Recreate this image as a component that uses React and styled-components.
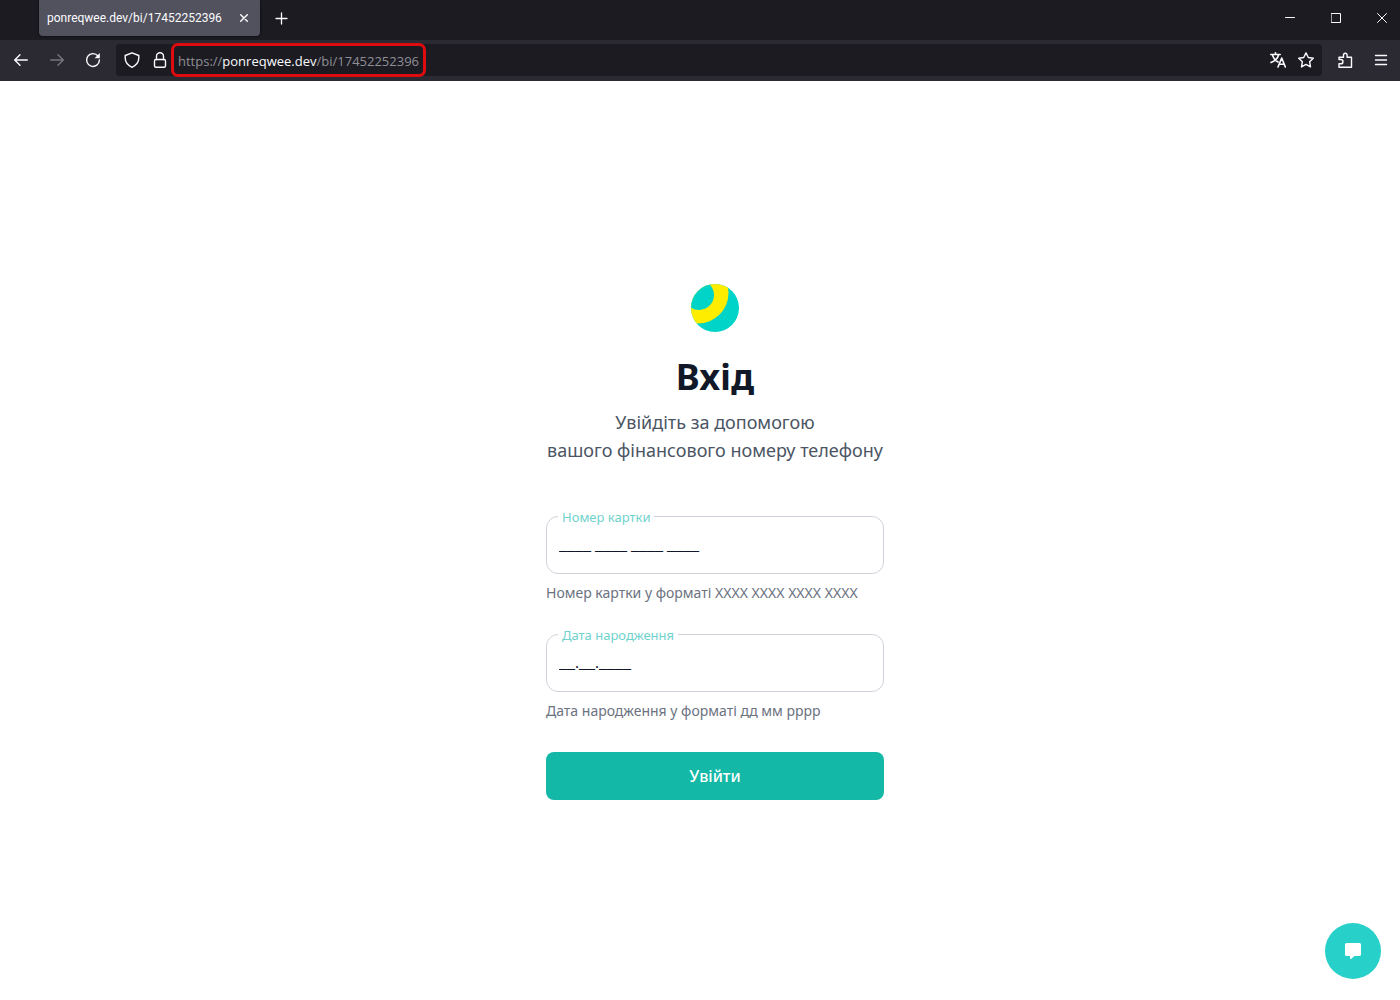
import React, { useState } from "react";
import styled, { createGlobalStyle } from "styled-components";

const GlobalStyle = createGlobalStyle`
  * {
    box-sizing: border-box;
  }
  body {
    margin: 0;
    background-color: white;
    font-family: "Noto Sans", "Open Sans", sans-serif;
  }
  button, input {
    font-family: inherit;
  }
`;

const Window = styled.div`
  display: flex;
  flex-direction: column;
  min-height: 100vh;
`;

const TabBar = styled.div`
  display: flex;
  height: 40px;
  padding-left: 39px;
  background-color: #1c1b22;
  color: #fbfbfe;
`;

const Tab = styled.div`
  display: flex;
  align-items: center;
  justify-content: space-between;
  width: 221px;
  height: 36px;
  padding: 0 6px 0 8px;
  border-radius: 0 0 4px 4px;
  background-color: #52525e;
  box-shadow: 0 0 3px rgba(0, 0, 0, 0.8);
  font-family: Roboto, "Noto Sans", sans-serif;
  font-size: 12px;
`;

const IconButton = styled.button`
  display: flex;
  align-items: center;
  justify-content: center;
  width: ${(props) => props.$width || 28}px;
  height: ${(props) => props.$height || 32}px;
  padding: 0;
  border: none;
  background: none;
  color: ${(props) => (props.$dim ? "#77767e" : "#fbfbfe")};
`;

const WindowButtons = styled.div`
  display: flex;
  gap: 10px;
  margin-left: auto;
`;

const Toolbar = styled.div`
  display: flex;
  align-items: center;
  height: 41px;
  padding: 0 5px 1px 3px;
  background-color: #2b2a33;
`;

const NavButtons = styled.div`
  display: flex;
  margin-right: 5px;
`;

const UrlBar = styled.div`
  display: flex;
  align-items: center;
  flex: 1;
  height: 32px;
  padding: 0 2px 0 5px;
  border-radius: 4px;
  background-color: #1c1b22;
`;

const SiteButtons = styled.div`
  display: flex;
  gap: 6px;
`;

const Url = styled.div`
  height: 34px;
  margin-right: auto;
  padding: 0 4px;
  border: 3px solid #e00b0e;
  border-radius: 7px;
  color: #8f8f96;
  font-family: "Open Sans", "Noto Sans", sans-serif;
  font-size: 13px;
  line-height: 30px;
  white-space: nowrap;
`;

const Host = styled.span`
  color: #fbfbfe;
`;

const MenuButtons = styled.div`
  display: flex;
  gap: 8px;
  margin-left: 9px;
`;

const Page = styled.main`
  display: flex;
  flex: 1;
  align-items: center;
  justify-content: center;
  padding: 3px 0 0 30px;
`;

const Form = styled.form`
  display: flex;
  flex-direction: column;
  align-items: center;
  width: 338px;
`;

const Title = styled.h1`
  margin: 25px 0 11px;
  color: #111827;
  font-size: 36px;
  font-weight: 700;
  line-height: 40px;
`;

const Subtitle = styled.p`
  margin: 0 0 44px;
  color: #4b5563;
  font-size: 18px;
  line-height: 28px;
  text-align: center;
  white-space: nowrap;
`;

const Field = styled.div`
  width: 100%;
  margin-bottom: 23px;
`;

const Outline = styled.fieldset`
  min-width: 0;
  height: 66px;
  margin: 0;
  padding: 0 12px;
  border: 1px solid #d1d1db;
  border-radius: 12px;
`;

const Legend = styled.legend`
  height: 16px;
  padding: 0 4px;
  margin-left: -1px;
  color: #6fd3cd;
  font-size: 13px;
  line-height: 18px;
`;

const Input = styled.input`
  display: block;
  width: 100%;
  height: 42px;
  padding: 0;
  border: none;
  outline: none;
  background: none;
  color: #111827;
  font-family: "Liberation Serif", serif;
  font-size: 16px;
`;

const Hint = styled.p`
  margin: 9px 0 0;
  color: #6b7280;
  font-size: 14px;
  line-height: 20px;
`;

const Submit = styled.button`
  width: 100%;
  height: 48px;
  margin-top: 8px;
  border: none;
  border-radius: 8px;
  background-color: #14b8a6;
  color: white;
  font-size: 16px;
  font-weight: 500;
`;

const ChatButton = styled.button`
  position: fixed;
  right: 19px;
  bottom: 21px;
  display: flex;
  align-items: center;
  justify-content: center;
  width: 56px;
  height: 56px;
  padding: 0;
  border: none;
  border-radius: 50%;
  background-color: #27d0c9;
`;

const Icon = ({ size = 16, stroke = 1.4, children }) => (
  <svg
    width={size}
    height={size}
    viewBox={`0 0 ${size} ${size}`}
    fill="none"
    stroke="currentColor"
    strokeWidth={stroke}
    strokeLinecap="round"
    strokeLinejoin="round"
    aria-hidden="true"
  >
    {children}
  </svg>
);

const Logo = () => (
  <svg width="48" height="48" viewBox="0 0 48 48" aria-hidden="true">
    <clipPath id="ball">
      <circle cx="24" cy="24" r="24" />
    </clipPath>
    <g clipPath="url(#ball)">
      <rect width="48" height="48" fill="#00d4c8" />
      <circle cx="7" cy="9" r="30.5" fill="#ffed00" />
      <circle cx="8" cy="11" r="15" fill="#00d4c8" />
    </g>
  </svg>
);

const MaskedField = ({ id, label, mask, hint }) => {
  const [value, setValue] = useState(mask);
  return (
    <Field>
      <Outline>
        <Legend>
          <label htmlFor={id}>{label}</label>
        </Legend>
        <Input id={id} value={value} onChange={(e) => setValue(e.target.value)} aria-describedby={id + "-hint"} />
      </Outline>
      <Hint id={id + "-hint"}>{hint}</Hint>
    </Field>
  );
};

const Browser = () => (
  <header>
    <TabBar>
      <Tab>
        ponreqwee.dev/bi/17452252396
        <IconButton $width={20} $height={20} aria-label="Close tab">
          <Icon size={8}>
            <path d="M.7.7l6.6 6.6M7.3.7L.7 7.3" />
          </Icon>
        </IconButton>
      </Tab>
      <IconButton $width={43} $height={36} aria-label="New tab">
        <Icon size={13} stroke={1.3}>
          <path d="M6.5 1v11M1 6.5h11" />
        </Icon>
      </IconButton>
      <WindowButtons>
        <IconButton $width={36} $height={36} aria-label="Minimize">
          <Icon size={10} stroke={1}>
            <path d="M.5 4.5h9" />
          </Icon>
        </IconButton>
        <IconButton $width={36} $height={36} aria-label="Maximize">
          <Icon size={10} stroke={1}>
            <path d="M.5.5h9v9h-9z" />
          </Icon>
        </IconButton>
        <IconButton $width={36} $height={36} aria-label="Close">
          <Icon size={10} stroke={1}>
            <path d="M.5.5l9 9M9.5.5l-9 9" />
          </Icon>
        </IconButton>
      </WindowButtons>
    </TabBar>
    <Toolbar>
      <NavButtons>
        <IconButton $width={36} aria-label="Back">
          <Icon>
            <path d="M14.3 8H1.8M7 2.7L1.7 8 7 13.3" />
          </Icon>
        </IconButton>
        <IconButton $width={36} $dim aria-label="Forward">
          <Icon>
            <path d="M1.7 8h12.5M9 2.7L14.3 8 9 13.3" />
          </Icon>
        </IconButton>
        <IconButton $width={36} aria-label="Reload">
          <Icon>
            <path d="M13 4A6.4 6.4 0 1 0 14.4 8" />
            <path d="M14.8 1v5.2H9.6z" fill="currentColor" stroke="none" />
          </Icon>
        </IconButton>
      </NavButtons>
      <UrlBar>
        <SiteButtons>
          <IconButton $width={22} aria-label="Protection">
            <Icon>
              <path d="M8 .8l6.800 2.700v2.300c0 4-2.500 7.500-6.800 9.500-4.300-2-6.800-5.500-6.800-9.500V3.500z" />
            </Icon>
          </IconButton>
          <IconButton $width={22} aria-label="Site information">
            <Icon>
              <path d="M4.500 7.500V4.300a3.500 3.500 0 0 1 7 0v3.200" />
              <rect x="2.500" y="7.500" width="11" height="7.700" rx="1.500" />
            </Icon>
          </IconButton>
        </SiteButtons>
        <Url>
          https://<Host>ponreqwee.dev</Host>/bi/17452252396
        </Url>
        <IconButton aria-label="Translate">
          <Icon stroke={1.6}>
            <path d="M.8 2.500h9.400M5.500.8v1.700M2.500 3c.8 3 3 5.500 5.500 7M8.500 3C7.800 6 5 9 1 10.500" />
            <path d="M8 15l3.700-9 3.600 9M9.300 12.300h4.800" />
          </Icon>
        </IconButton>
        <IconButton aria-label="Bookmark">
          <Icon>
            <path d="M8 .8l2.300 4.700 5 .7-3.700 3.500.9 5.200L8 12.400l-4.500 2.500.9-5.200L.7 6.200l5-.7z" />
          </Icon>
        </IconButton>
      </UrlBar>
      <MenuButtons>
        <IconButton aria-label="Extensions">
          <Icon>
            <path d="M2 7.500V5.200h4.500V3a1.800 1.800 0 0 1 3.600 0v2.200h4.400v10H2v-3.400h1.800a2.100 2.100 0 0 0 0-4.300z" />
          </Icon>
        </IconButton>
        <IconButton aria-label="Menu">
          <Icon size={14} stroke={1.4}>
            <path d="M1.500 2.500h11M1.500 7h11M1.500 11.500h11" />
          </Icon>
        </IconButton>
      </MenuButtons>
    </Toolbar>
  </header>
);

const App = () => {
  return (
    <Window>
      <GlobalStyle />
      <Browser />
      <Page>
        <Form onSubmit={(e) => e.preventDefault()}>
          <Logo />
          <Title>Вхід</Title>
          <Subtitle>
            Увійдіть за допомогою
            <br />
            вашого фінансового номеру телефону
          </Subtitle>
          <MaskedField
            id="card"
            label="Номер картки"
            mask="____ ____ ____ ____"
            hint="Номер картки у форматі ХХХХ ХХХХ ХХХХ ХХХХ"
          />
          <MaskedField
            id="birth"
            label="Дата народження"
            mask="__.__.____"
            hint="Дата народження у форматі дд мм рррр"
          />
          <Submit type="submit">Увійти</Submit>
        </Form>
      </Page>
      <ChatButton aria-label="Chat">
        <svg width="16" height="16" viewBox="0 0 16 16" fill="white" aria-hidden="true">
          <path d="M1.500 0h13A1.500 1.500 0 0 1 16 1.500v10a1.500 1.500 0 0 1-1.500 1.500H9.500L6 16h-1v-3H1.500A1.500 1.500 0 0 1 0 11.500v-10A1.500 1.500 0 0 1 1.500 0z" />
        </svg>
      </ChatButton>
    </Window>
  );
};

export default App;
